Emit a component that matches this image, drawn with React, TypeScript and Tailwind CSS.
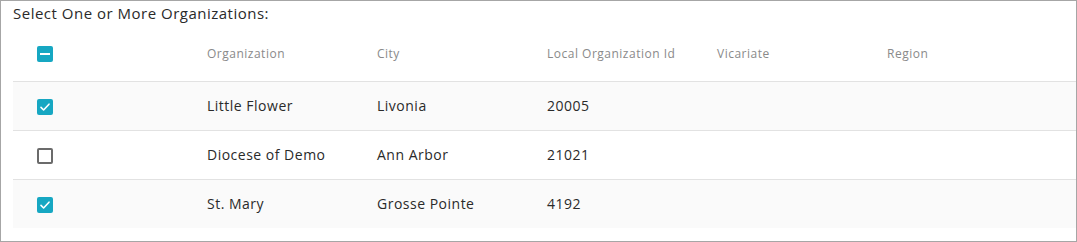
import React from "react";

type Org = { name: string; city: string; localId: string; vicariate: string; region: string; checked: boolean };

const ORGS: Org[] = [
  { name: "Little Flower", city: "Livonia", localId: "20005", vicariate: "", region: "", checked: true },
  { name: "Diocese of Demo", city: "Ann Arbor", localId: "21021", vicariate: "", region: "", checked: false },
  { name: "St. Mary", city: "Grosse Pointe", localId: "4192", vicariate: "", region: "", checked: true },
];

function Checkbox({ state }: { state: "on" | "off" | "mixed" }) {
  if (state === "off") {
    return <span className="block w-4 h-4 rounded-[2px] border-2 border-[#6b6b6b] bg-white" />;
  }
  return (
    <span className="flex items-center justify-center w-4 h-4 rounded-[2px] bg-[#16a7c2]">
      {state === "mixed" ? (
        <span className="block w-[10px] h-[2px] bg-white" />
      ) : (
        <svg width="12" height="12" viewBox="0 0 12 12" fill="none" stroke="white" strokeWidth="1.6" strokeLinecap="round" strokeLinejoin="round">
          <path d="M2 6.4 4.6 9 10 3.2" />
        </svg>
      )}
    </span>
  );
}

export default function App() {
  return (
    <div className="w-[1077px] h-[242px] border border-[#a6a6a6] bg-white pl-3 font-['Open_Sans',sans-serif] overflow-hidden">
      {/* title */}
      <div className="h-[26px] pt-[2px] text-[15px] leading-[20px] tracking-[0.5px] text-[#2a2a2a]">Select One or More Organizations:</div>

      <table className="w-full table-fixed border-collapse">
        <colgroup>
          <col className="w-[194px]" />
          <col className="w-[170px]" />
          <col className="w-[170px]" />
          <col className="w-[170px]" />
          <col className="w-[170px]" />
          <col />
        </colgroup>
        <thead>
          <tr className="h-[54px] border-b border-[#e2e2e2] text-[12px] tracking-[0.5px] text-[#8a8a8a] text-left">
            <th className="pl-6 font-normal">
              <Checkbox state="mixed" />
            </th>
            <th className="font-normal">Organization</th>
            <th className="font-normal">City</th>
            <th className="font-normal">Local Organization Id</th>
            <th className="font-normal">Vicariate</th>
            <th className="font-normal">Region</th>
          </tr>
        </thead>
        <tbody className="text-[14px] tracking-[0.5px] text-[#2a2a2a]">
          {ORGS.map((o, i) => (
            <tr key={o.name} className={`h-[49px] ${i % 2 === 0 ? "bg-[#fafafa]" : "bg-white"} ${i < ORGS.length - 1 ? "border-b border-[#e2e2e2]" : ""}`}>
              <td className="pl-6 pt-[3px]">
                <Checkbox state={o.checked ? "on" : "off"} />
              </td>
              <td>{o.name}</td>
              <td>{o.city}</td>
              <td>{o.localId}</td>
              <td>{o.vicariate}</td>
              <td>{o.region}</td>
            </tr>
          ))}
        </tbody>
      </table>
    </div>
  );
}
